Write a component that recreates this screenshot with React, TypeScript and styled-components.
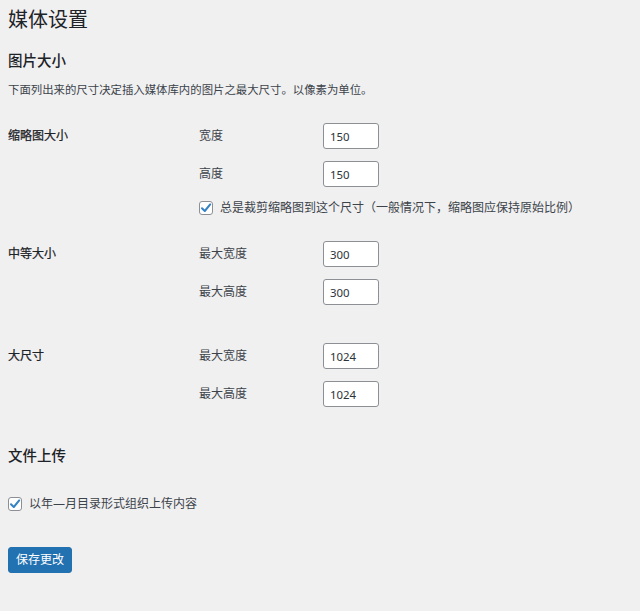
import React, {useState} from 'react';
import styled, {createGlobalStyle} from 'styled-components';

const GlobalStyle = createGlobalStyle`
  html, body {
    margin: 0;
    padding: 0;
    background: #f0f0f1;
  }
  body {
    font-family: "Noto Sans", "Noto Sans CJK SC", sans-serif;
    font-size: 12px;
    color: #3c434a;
  }
`

const Wrap = styled.div`
  padding: 7px 8px 40px 8px;
  min-height: 564px;
  background: #f0f0f1;
`

const Title = styled.h1`
  margin: 0;
  font-size: 20px;
  line-height: 26px;
  font-weight: 400;
  color: #1d2327;
`

const SectionTitle = styled.h2<{ $top: number }>`
  margin: ${p => p.$top}px 0 0 0;
  font-size: 14.5px;
  line-height: 20px;
  font-weight: 500;
  color: #1d2327;
`

const Desc = styled.p`
  margin: 12px 0 0 0;
  font-size: 11.4px;
  line-height: 16px;
`

const SizeGroup = styled.div<{ $top: number }>`
  display: grid;
  grid-template-columns: 191px 1fr;
  margin-top: ${p => p.$top}px;
`

const GroupLabel = styled.div`
  padding-top: 5px;
  line-height: 16px;
  font-weight: 400;
  color: #1d2327;
  -webkit-text-stroke: 0.25px #1d2327;
`

const Fields = styled.div`
  display: flex;
  flex-direction: column;
  gap: 12px;
`

const FieldRow = styled.label`
  display: flex;
  align-items: center;
  height: 26px;
`

const FieldName = styled.span`
  width: 124px;
  line-height: 16px;
`

const NumberInput = styled.input`
  box-sizing: border-box;
  width: 56px;
  height: 26px;
  padding: 0 6px;
  border: 1px solid #8c8f94;
  border-radius: 3px;
  background: #fff;
  font-family: "Noto Sans", "Noto Sans CJK SC", sans-serif;
  font-size: 11.4px;
  color: #2c3338;
  outline: none;
`

const CheckRow = styled.label<{ $top: number }>`
  display: flex;
  align-items: center;
  gap: 7px;
  margin-top: ${p => p.$top}px;
  line-height: 16px;
  cursor: pointer;
`

const Box = styled.span`
  box-sizing: border-box;
  width: 14px;
  height: 14px;
  border: 1px solid #8c8f94;
  border-radius: 3px;
  background: #fff;
  display: flex;
  align-items: center;
  justify-content: center;
  flex-shrink: 0;
  overflow: visible;
`

const SaveButton = styled.button`
  margin-top: 35px;
  height: 26px;
  padding: 0 7px;
  border: 1px solid #2271b1;
  border-radius: 3px;
  background: #2271b1;
  color: #fff;
  font-family: "Noto Sans", "Noto Sans CJK SC", sans-serif;
  font-size: 12px;
  line-height: 24px;
  cursor: pointer;
`

const Checkbox = ({checked, onToggle}: {checked: boolean, onToggle: () => void}) => (
    <Box onClick={onToggle}>
        {checked &&
        <svg width="14" height="14" viewBox="0 0 14 14" style={{flexShrink: 0}}>
            <path d="M3 7.2 L5.8 10 L11.2 3.4" fill="none" stroke="#3582c4" strokeWidth="2" strokeLinecap="round" strokeLinejoin="round"/>
        </svg>}
    </Box>
)

interface Isize {
    label: string
    fields: { name: string, value: string }[]
    top: number
}

const sizes: Isize[] = [
    {label: '缩略图大小', top: 25, fields: [{name: '宽度', value: '150'}, {name: '高度', value: '150'}]},
    {label: '中等大小', top: 25, fields: [{name: '最大宽度', value: '300'}, {name: '最大高度', value: '300'}]},
    {label: '大尺寸', top: 38, fields: [{name: '最大宽度', value: '1024'}, {name: '最大高度', value: '1024'}]},
]

const App = () => {
    const [crop, setCrop] = useState(true);
    const [byMonth, setByMonth] = useState(true);

    return (
        <Wrap>
            <GlobalStyle/>
            <Title>媒体设置</Title>
            <SectionTitle $top={17}>图片大小</SectionTitle>
            <Desc>下面列出来的尺寸决定插入媒体库内的图片之最大尺寸。以像素为单位。</Desc>

            {sizes.map((size, index) => (
                <SizeGroup $top={size.top} key={index}>
                    <GroupLabel>{size.label}</GroupLabel>
                    <div>
                        <Fields>
                            {size.fields.map(field => (
                                <FieldRow key={field.name}>
                                    <FieldName>{field.name}</FieldName>
                                    <NumberInput type="text" defaultValue={field.value}/>
                                </FieldRow>
                            ))}
                        </Fields>
                        {index === 0 &&
                        <CheckRow $top={13}>
                            <Checkbox checked={crop} onToggle={() => setCrop(!crop)}/>
                            总是裁剪缩略图到这个尺寸（一般情况下，缩略图应保持原始比例）
                        </CheckRow>}
                    </div>
                </SizeGroup>
            ))}

            <SectionTitle $top={38}>文件上传</SectionTitle>
            <CheckRow $top={31}>
                <Checkbox checked={byMonth} onToggle={() => setByMonth(!byMonth)}/>
                以年—月目录形式组织上传内容
            </CheckRow>

            <SaveButton type="submit">保存更改</SaveButton>
        </Wrap>
    );
};

export default App;
